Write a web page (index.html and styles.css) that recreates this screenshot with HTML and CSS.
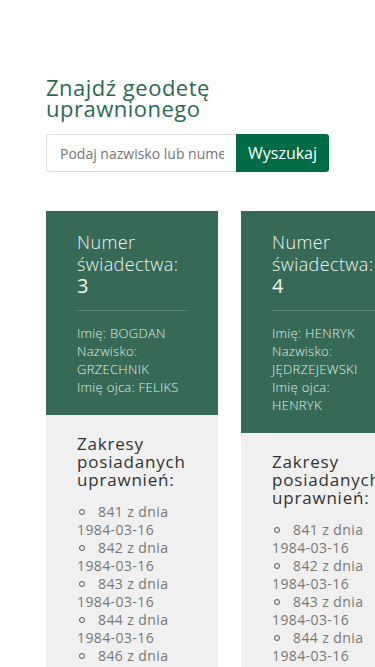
FILE: index.html
```html
<!DOCTYPE html>
<html lang="pl">
<head>
    <meta charset="UTF-8">
    <meta name="viewport" content="width=device-width, initial-scale=1.0">
    <title>Znajdź geodetę uprawnionego</title>
    <link rel="stylesheet" href="styles.css">
</head>
<body>
    <div class="page">
        <h1>Znajdź geodetę uprawnionego</h1>

        <!-- Wyszukiwarka -->
        <form class="search" onsubmit="return false">
            <input type="text" placeholder="Podaj nazwisko lub numer świadectwa">
            <button type="submit">Wyszukaj</button>
        </form>

        <!-- Wyniki -->
        <div class="results">
            <div class="card">
                <div class="card-head">
                    <h3>Numer świadectwa: <span class="num">3</span></h3>
                    <hr>
                    <p>Imię: BOGDAN<br>Nazwisko: GRZECHNIK<br>Imię ojca: FELIKS</p>
                </div>
                <div class="card-body">
                    <h4>Zakresy posiadanych uprawnień:</h4>
                    <ul>
                        <li>841 z dnia 1984-03-16</li>
                        <li>842 z dnia 1984-03-16</li>
                        <li>843 z dnia 1984-03-16</li>
                        <li>844 z dnia 1984-03-16</li>
                        <li>846 z dnia 1984-03-16</li>
                        <li>847 z dnia 1984-03-16</li>
                    </ul>
                </div>
            </div>

            <div class="card">
                <div class="card-head">
                    <h3>Numer świadectwa: <span class="num">4</span></h3>
                    <hr>
                    <p>Imię: HENRYK<br>Nazwisko: JĘDRZEJEWSKI<br>Imię ojca: HENRYK</p>
                </div>
                <div class="card-body">
                    <h4>Zakresy posiadanych uprawnień:</h4>
                    <ul>
                        <li>841 z dnia 1984-03-16</li>
                        <li>842 z dnia 1984-03-16</li>
                        <li>843 z dnia 1984-03-16</li>
                        <li>844 z dnia 1984-03-16</li>
                        <li>845 z dnia 1984-03-16</li>
                        <li>846 z dnia 1984-03-16</li>
                    </ul>
                </div>
            </div>
        </div>
    </div>
</body>
</html>
```

FILE: styles.css
```css
body {
    margin: 0;
    padding: 0;
    background-color: #ffffff;
    font-family: "Open Sans", Arial, sans-serif;
    color: #333;
    overflow-x: hidden;
}
.page {
    padding: 77px 0 0 46px;
}
h1 {
    margin: 0 0 15px 0;
    width: 283px;
    font-size: 22px;
    line-height: 21px;
    font-weight: 400;
    letter-spacing: 0.5px;
    color: #2b6a50;
}
/* Wyszukiwarka */
.search {
    display: flex;
    width: 283px;
    height: 38px;
    margin: 0 0 39px 0;
}
.search input {
    flex: 1;
    min-width: 0;
    box-sizing: border-box;
    height: 38px;
    padding: 0 12px 0 13px;
    border: 1px solid #dcdfe2;
    border-right: none;
    border-radius: 3px 0 0 3px;
    font-family: "Open Sans", Arial, sans-serif;
    font-size: 14px;
    color: #333;
    outline: none;
}
.search input::placeholder {
    color: #757575;
}
.search button {
    width: 93px;
    height: 38px;
    border: none;
    border-radius: 0 3px 3px 0;
    background-color: #006c45;
    color: #ffffff;
    font-family: "Open Sans", Arial, sans-serif;
    font-size: 16px;
    cursor: pointer;
}
/* Karty */
.results {
    display: flex;
    align-items: flex-start;
    gap: 23px;
}
.card {
    flex: 0 0 172px;
    width: 172px;
}
.card-head {
    background-color: #366a57;
    color: #f0f4f2;
    padding: 20px 31px 19px 31px;
}
.card-head h3 {
    margin: 0;
    font-size: 18px;
    line-height: 22px;
    font-weight: 300;
    letter-spacing: 0.4px;
}
.card-head .num {
    display: block;
    font-size: 20px;
    line-height: 22px;
    font-weight: 400;
}
.card-head hr {
    margin: 13px 0 13px 0;
    border: none;
    border-top: 1px solid rgba(255, 255, 255, 0.18);
}
.card-head p {
    margin: 0;
    font-size: 13px;
    line-height: 18px;
    font-weight: 300;
    letter-spacing: 0.3px;
    color: #e3eae6;
}
.card-body {
    background-color: #f0f0f0;
    padding: 20px 31px 20px 31px;
}
.card-body h4 {
    margin: 0 0 14px 0;
    font-size: 17px;
    line-height: 18px;
    font-weight: 400;
    letter-spacing: 0.8px;
    color: #333;
}
.card-body ul {
    margin: 0;
    padding: 0;
    list-style: none;
}
.card-body li {
    font-size: 14px;
    line-height: 18px;
    letter-spacing: 0.4px;
    color: #777;
}
.card-body li::before {
    content: "";
    display: inline-block;
    width: 4px;
    height: 4px;
    border: 1px solid #555;
    border-radius: 50%;
    margin: 0 13px 2px 2px;
}
```
